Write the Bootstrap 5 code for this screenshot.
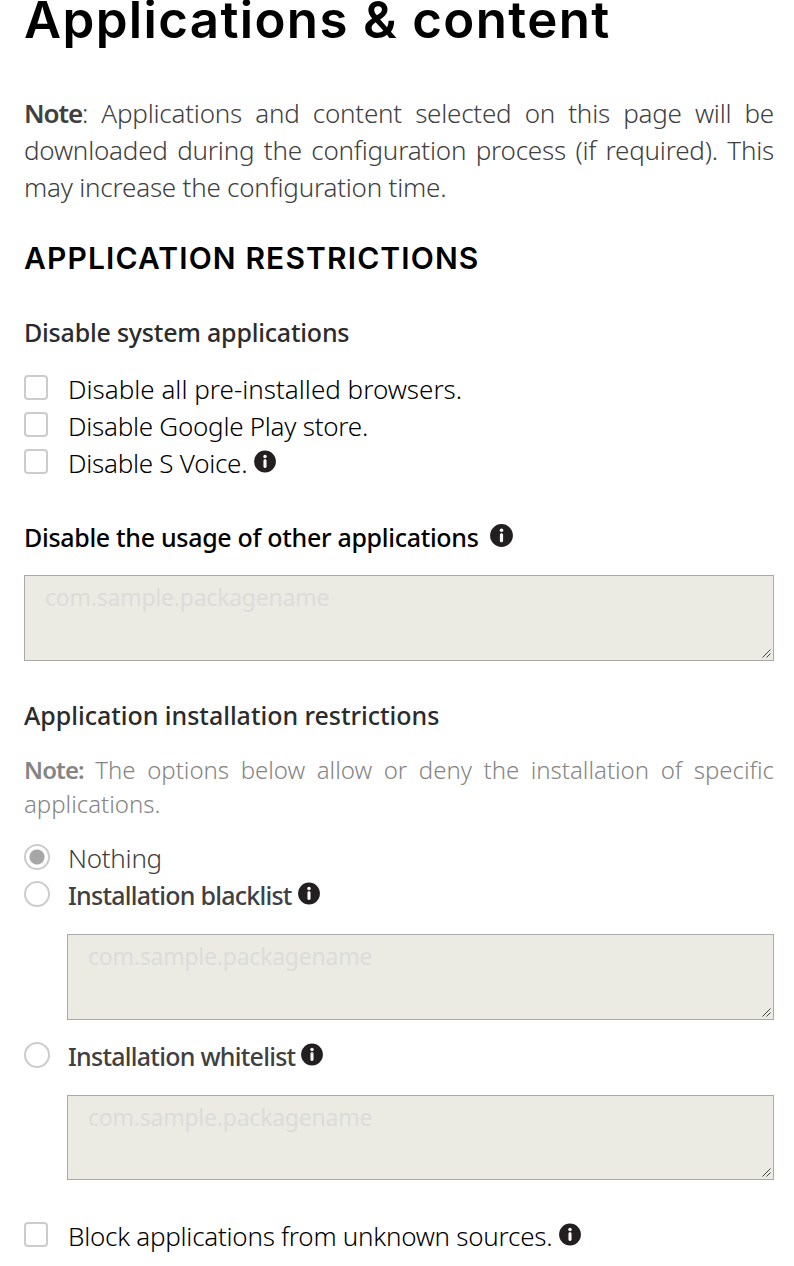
<!doctype html>
<html lang="en">
<head>
<meta charset="utf-8">
<title>Applications &amp; content</title>
<meta name="viewport" content="width=device-width, initial-scale=1">
<link rel="stylesheet" href="https://cdn.jsdelivr.net/npm/bootstrap@5.3.0/dist/css/bootstrap.min.css">
<style>
body{font-family:"Noto Sans","Open Sans",sans-serif;font-weight:300;font-size:26px;line-height:37px;color:#404040;background:#fff;overflow:hidden}
main{padding:0 20px 0 24px}
h1,h2{font-family:Inter,sans-serif;font-weight:600;color:#000;white-space:nowrap}
h1{font-size:51px;line-height:58px;margin:-9px 0 46px;letter-spacing:1.35px}
h2{font-size:30px;line-height:37px;margin:34px 0 37px;letter-spacing:1.13px}
h3{font-size:25px;line-height:37px;font-weight:500;color:#2b2b2b;margin:0;letter-spacing:-.31px;white-space:nowrap}
.system-title{margin-bottom:20px;letter-spacing:-.21px}
.usage-title{margin:37px 0 19px}
.usage-title .info-mark{margin-left:11px;width:23px}
.install-title{margin-top:36px;letter-spacing:-.03px}
strong{font-weight:600}
.intro{text-align:justify;margin:0;letter-spacing:-.22px}
.intro strong{letter-spacing:-1.1px}
.hint{font-size:24px;line-height:34px;color:#858585;text-align:justify;margin:19px 0;letter-spacing:-.01px}
.hint strong{letter-spacing:-.9px}
.option{height:37px;white-space:nowrap;color:#000}
.option .form-check-input{flex:none;width:24px;height:25px;margin:4px 20px 0 0;border:2px solid #ccc;border-radius:4px;background-color:#fff}
.option .form-check-input[type=radio]{width:26px;height:26px;margin-right:18px;border-radius:50%}
.option .form-check-input[type=radio]:checked{background:radial-gradient(circle at 50% 50%,#a6a6a6 7px,#fff 8px)}
.option.soft{color:#404040}
.tight{letter-spacing:-.26px}
.option .list-label{font-size:25px;font-weight:500;letter-spacing:-.75px}
.info-mark{flex:none;width:22px;height:23px;margin:5px 0 0 7px}
.list-label + .info-mark{margin-left:6px}
textarea.form-control{height:86px;min-height:0;padding:4px 20px;font-size:23px;line-height:34px;font-weight:400;border:1px solid #a9a9a9;border-radius:0;resize:none;overflow:hidden;letter-spacing:-.23px;background:#ebebe4 url("data:image/svg+xml,%3Csvg xmlns='http://www.w3.org/2000/svg' width='9' height='9'%3E%3Cpath d='M.5 8.5l8-8M4.500 8.500l4-4' stroke='%23444' stroke-width='1' fill='none'/%3E%3C/svg%3E") no-repeat right 2px bottom 2px}
textarea.form-control::placeholder{color:#dcdcda;opacity:1}
.blacklist{margin:20px 0 18px 43px}
.whitelist{margin:20px 0 38px 43px}
.whitelist textarea.form-control{height:85px}
</style>
</head>
<body>
<svg class="d-none"><symbol id="info" viewBox="0 0 23 23"><circle cx="11.5" cy="11.5" r="11.4" fill="#231f20"/><circle cx="11.5" cy="6.2" r="1.8" fill="#fff"/><rect x="9.9" y="9.2" width="3.2" height="9" rx="1.5" fill="#fff"/></symbol></svg>
<main class="d-flow-root">
<h1>Applications &amp; content</h1>
<p class="intro"><strong>Note</strong>: Applications and content selected on this page will be downloaded during the configuration process (if required). This may increase the configuration time.</p>
<h2>APPLICATION RESTRICTIONS</h2>
<h3 class="system-title">Disable system applications</h3>
<label class="option d-flex"><input class="form-check-input" type="checkbox"><span>Disable all pre-installed browsers.</span></label>
<label class="option d-flex"><input class="form-check-input" type="checkbox"><span class="tight">Disable Google Play store.</span></label>
<label class="option d-flex"><input class="form-check-input" type="checkbox"><span class="tight">Disable S Voice.</span><svg class="info-mark"><use href="#info"/></svg></label>
<h3 class="usage-title d-flex text-black">Disable the usage of other applications<svg class="info-mark"><use href="#info"/></svg></h3>
<textarea class="form-control d-block" placeholder="com.sample.packagename"></textarea>
<h3 class="install-title">Application installation restrictions</h3>
<p class="hint"><strong>Note:</strong> The options below allow or deny the installation of specific applications.</p>
<label class="option soft d-flex"><input class="form-check-input" type="radio" name="rule" checked><span class="tight">Nothing</span></label>
<label class="option soft d-flex"><input class="form-check-input" type="radio" name="rule"><span class="list-label">Installation blacklist</span><svg class="info-mark"><use href="#info"/></svg></label>
<div class="blacklist"><textarea class="form-control d-block" placeholder="com.sample.packagename"></textarea></div>
<label class="option soft d-flex"><input class="form-check-input" type="radio" name="rule"><span class="list-label">Installation whitelist</span><svg class="info-mark"><use href="#info"/></svg></label>
<div class="whitelist"><textarea class="form-control d-block" placeholder="com.sample.packagename"></textarea></div>
<label class="option d-flex"><input class="form-check-input" type="checkbox"><span class="tight">Block applications from unknown sources.</span><svg class="info-mark"><use href="#info"/></svg></label>
</main>
<script src="https://cdn.jsdelivr.net/npm/bootstrap@5.3.0/dist/js/bootstrap.bundle.min.js"></script>
</body>
</html>
